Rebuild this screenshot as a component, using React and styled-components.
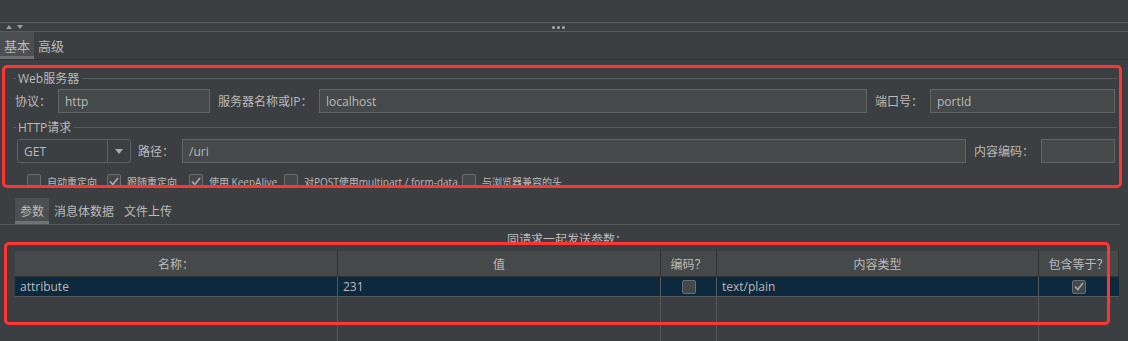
import React from "react";
import styled, { createGlobalStyle } from "styled-components";

const GlobalStyle = createGlobalStyle`
	html, body {
		margin: 0;
		padding: 0;
		background: #3c3f41;
		overflow: hidden;
	}
	* { box-sizing: border-box; }
`;

const Page = styled.div`
	position: relative;
	width: 1128px;
	height: 341px;
	display: flex;
	flex-direction: column;
	background: #3c3f41;
	color: #bbbbbb;
	font-family: "Open Sans", "Noto Sans CJK SC", sans-serif;
	font-size: 12px;
	overflow: hidden;
`;

const TopSpace = styled.div`
	height: 22px;
	flex: none;
`;

const Splitter = styled.div`
	height: 10px;
	flex: none;
	border-top: 1px solid #595c5e;
	border-bottom: 1px solid #595c5e;
	display: flex;
	align-items: center;
	padding-left: 6px;
	gap: 5px;
`;

const Arrow = styled.span`
	width: 0;
	height: 0;
	border-left: 3.5px solid transparent;
	border-right: 3.5px solid transparent;
	${(p) =>
		p.down
			? "border-top: 4px solid #9a9c9e;"
			: "border-bottom: 4px solid #9a9c9e;"}
`;

const Dots = styled.div`
	margin-left: 524px;
	display: flex;
	gap: 2px;
	span {
		width: 3px;
		height: 3px;
		border-radius: 50%;
		background: #a8aaac;
	}
`;

const TabBar = styled.div`
	display: flex;
	flex: none;
	height: ${(p) => p.h}px;
	margin-top: ${(p) => p.mt || 0}px;
	padding-left: ${(p) => p.pl || 0}px;
	margin-right: ${(p) => p.mr || 0}px;
	border-bottom: 1px solid ${(p) => p.line || "#333537"};
`;

const Tab = styled.div`
	display: flex;
	align-items: center;
	padding: 0 ${(p) => p.px || 4}px;
	font-size: ${(p) => p.fs || 13}px;
	color: #bbbbbb;
	background: ${(p) => (p.active ? "#4b4f51" : "transparent")};
	border-bottom: 3px solid ${(p) => (p.active ? "#6e7275" : "transparent")};
	padding-top: 3px;
`;

const Section = styled.div`
	flex: none;
	padding: 0 11px 0 13px;
`;

const Legend = styled.div`
	display: flex;
	align-items: center;
	height: 14px;
	margin-top: ${(p) => p.mt}px;
	font-size: 12px;
	&::before {
		content: "";
		width: 3px;
		height: 1px;
		background: #595c5e;
		margin-right: 2px;
	}
	&::after {
		content: "";
		flex: 1;
		height: 1px;
		background: #595c5e;
		margin-left: 3px;
	}
`;

const FieldRow = styled.div`
	display: flex;
	align-items: center;
	height: 24px;
	margin-top: ${(p) => p.mt}px;
	padding-left: ${(p) => p.pl}px;
`;

const Label = styled.span`
	width: ${(p) => p.w}px;
	margin-left: ${(p) => p.ml || 0}px;
	flex: none;
	white-space: nowrap;
	font-size: 12px;
`;

const Input = styled.div`
	width: ${(p) => p.w}px;
	height: 24px;
	flex: none;
	background: #45494a;
	border: 1px solid #646464;
	display: flex;
	align-items: center;
	padding-left: 6px;
	font-size: 12px;
	color: #bbbbbb;
`;

const Combo = styled.div`
	width: 114px;
	height: 24px;
	flex: none;
	display: flex;
	border: 1px solid #5e6162;
	border-radius: 3px;
	background: #3c3f41;
`;

const ComboValue = styled.div`
	flex: 1;
	display: flex;
	align-items: center;
	padding-left: 6px;
	font-size: 12px;
`;

const ComboButton = styled.div`
	width: 23px;
	border-left: 1px solid #5e6162;
	display: flex;
	align-items: center;
	justify-content: center;
	&::after {
		content: "";
		border-left: 4px solid transparent;
		border-right: 4px solid transparent;
		border-top: 5px solid #a8aaac;
	}
`;

const CheckRow = styled.div`
	display: flex;
	align-items: flex-start;
	height: 14px;
	margin-top: 11px;
	padding-left: 14px;
	overflow: hidden;
`;

const CheckItem = styled.div`
	display: flex;
	align-items: flex-start;
	width: ${(p) => p.w}px;
	flex: none;
	gap: 6px;
	font-size: 10px;
	white-space: nowrap;
	span {
		line-height: 17px;
	}
`;

const Box = styled.div`
	width: 14px;
	height: 14px;
	flex: none;
	border: 1px solid #6b6e70;
	border-radius: 2px;
	background: #43494a;
	display: flex;
	align-items: center;
	justify-content: center;
`;

const Caption = styled.div`
	height: 26px;
	flex: none;
	display: flex;
	align-items: center;
	justify-content: center;
	padding-left: 6px;
	padding-top: 2px;
	font-size: 12px;
`;

const Table = styled.div`
	flex: 1;
	margin-left: 15px;
	width: 1104px;
	display: grid;
	grid-template-columns: 323px 323px 56px 322px 80px;
	grid-template-rows: 26px 20px 1fr;
`;

const HeadCell = styled.div`
	background: #45494a;
	border-right: 1px solid #2f3133;
	border-bottom: 1px solid #323436;
	display: flex;
	align-items: center;
	justify-content: center;
	font-size: 12px;
	&:last-of-type {
		border-right: none;
	}
`;

const Cell = styled.div`
	background: ${(p) => (p.selected ? "#0d293e" : "transparent")};
	border-right: ${(p) => (p.last ? "none" : "1px solid #555759")};
	border-bottom: ${(p) => (p.selected ? "1px solid #55585a" : "none")};
	display: flex;
	align-items: center;
	justify-content: ${(p) => (p.center ? "center" : "flex-start")};
	padding-left: ${(p) => (p.center ? 0 : 5)}px;
	font-size: 12px;
	color: #bbbbbb;
`;

const Highlight = styled.div`
	position: absolute;
	border: 3.5px solid #ff3535;
	border-radius: 5px;
	pointer-events: none;
`;

const Check = () => (
	<svg width="10" height="9" viewBox="0 0 10 9">
		<path d="M1 4.5 L3.8 7.5 L9 1" fill="none" stroke="#a9abad" strokeWidth="1.6" />
	</svg>
);

const CheckBox = ({ checked }) => <Box>{checked && <Check />}</Box>;

const checks = [
	{ label: "自动重定向", checked: false, w: 80 },
	{ label: "跟随重定向", checked: true, w: 82 },
	{ label: "使用 KeepAlive", checked: true, w: 95 },
	{ label: "对POST使用multipart / form-data", checked: false, w: 178 },
	{ label: "与浏览器兼容的头", checked: false, w: 140 },
];

const columns = ["名称：", "值", "编码？", "内容类型", "包含等于？"];

export default function App() {
	return (
		<Page>
			<GlobalStyle />
			<TopSpace />
			<Splitter>
				<Arrow />
				<Arrow down />
				<Dots>
					<span />
					<span />
					<span />
				</Dots>
			</Splitter>
			<TabBar h={28}>
				<Tab active>基本</Tab>
				<Tab>高级</Tab>
			</TabBar>

			<Section>
				<Legend mt={11}>Web服务器</Legend>
				<FieldRow mt={4} pl={2}>
					<Label w={43}>协议：</Label>
					<Input w={152}>http</Input>
					<Label w={101} ml={8}>服务器名称或IP：</Label>
					<Input w={548}>localhost</Input>
					<Label w={55} ml={8}>端口号：</Label>
					<Input w={185}>portId</Input>
				</FieldRow>
				<Legend mt={7}>HTTP请求</Legend>
				<FieldRow mt={5} pl={4}>
					<Combo>
						<ComboValue>GET</ComboValue>
						<ComboButton />
					</Combo>
					<Label w={44} ml={7}>路径：</Label>
					<Input w={784}>/uri</Input>
					<Label w={67} ml={8}>内容编码：</Label>
					<Input w={74} />
				</FieldRow>
				<CheckRow>
					{checks.map((c) => (
						<CheckItem key={c.label} w={c.w}>
							<CheckBox checked={c.checked} />
							<span>{c.label}</span>
						</CheckItem>
					))}
				</CheckRow>
			</Section>

			<TabBar h={27} mt={10} pl={15} mr={8} line="#555759">
				<Tab active px={5} fs={12}>参数</Tab>
				<Tab px={5} fs={12}>消息体数据</Tab>
				<Tab px={5} fs={12}>文件上传</Tab>
			</TabBar>
			<Caption>同请求一起发送参数：</Caption>
			<Table>
				{columns.map((c) => (
					<HeadCell key={c}>{c}</HeadCell>
				))}
				<Cell selected>attribute</Cell>
				<Cell selected>231</Cell>
				<Cell selected center>
					<CheckBox />
				</Cell>
				<Cell selected>text/plain</Cell>
				<Cell selected center last>
					<CheckBox checked />
				</Cell>
				<Cell />
				<Cell />
				<Cell />
				<Cell />
				<Cell last />
			</Table>

			<Highlight style={{ left: 2, top: 65, width: 1120, height: 123 }} />
			<Highlight style={{ left: 4, top: 242, width: 1106, height: 83 }} />
		</Page>
	);
}
